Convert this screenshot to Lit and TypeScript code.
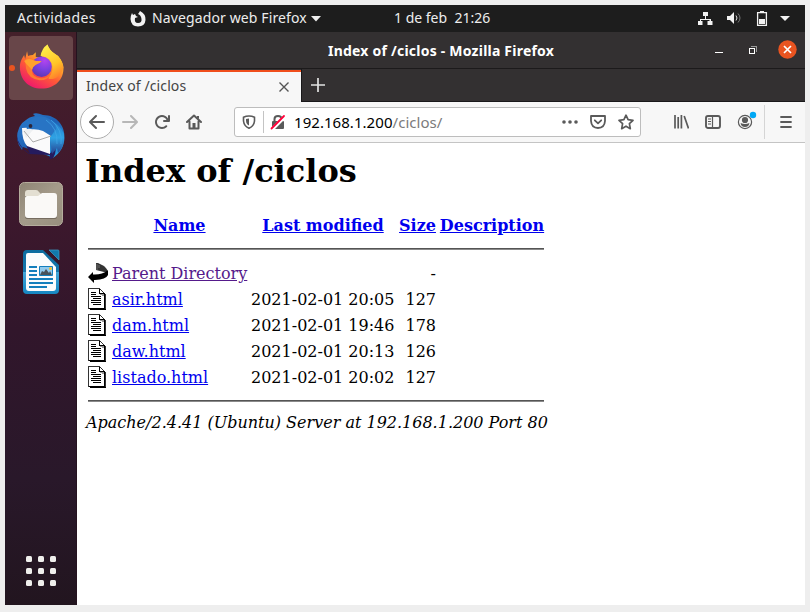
import { LitElement, html, css, svg } from "lit";
import { customElement } from "lit/decorators.js";

const firefox = html`<svg width="46" height="48" viewBox="0 0 46 48">
  <defs>
    <linearGradient id="fo" x1=".85" y1="0" x2=".25" y2="1"><stop offset="0" stop-color="#fff44f"/><stop offset=".35" stop-color="#ffb02a"/><stop offset=".62" stop-color="#ff5a36"/><stop offset="1" stop-color="#ec1470"/></linearGradient>
    <linearGradient id="fy" x1=".3" y1="0" x2=".7" y2="1"><stop offset="0" stop-color="#fff04b"/><stop offset=".6" stop-color="#ffc428"/><stop offset="1" stop-color="#ff7a2c"/></linearGradient>
    <radialGradient id="fp" cx=".65" cy=".2" r=".9"><stop offset="0" stop-color="#b345ee"/><stop offset=".5" stop-color="#7a40e0"/><stop offset="1" stop-color="#5a35a8"/></radialGradient>
  </defs>
  <g transform="translate(.3 -1.500) scale(.97)">
  <path fill="url(#fo)" d="M8 9 9 14Q11 13 14 13L17 10V15H23L29 2Q31 8 37 12L40 14Q45 20 45.500 26C46 38 37 47.500 23 47.500S1 38 .6 26C.5 20 3 16 5 13L6 17Z"/>
  <path fill="url(#fy)" d="M29 2Q31 8 36 11L40 14Q45 20 45.500 26C42 37 34 39 30 37Q37 28 33 21T22 14Q23 6 29 2Z"/>
  <circle cx="23" cy="25" r="10.500" fill="url(#fp)"/>
  <path fill="#ff7a2f" d="M6 18Q10 14 15 18L20 20Q19 22 15 24 12 28 14 33C18 38 28 38 32 33Q30 39 21 39 9 37 7 27Z"/>
  <path fill="#ffa22c" d="M5 19Q10 15 16 19H23Q21 22 17 23 14 25 13 28L7 22Z"/>
  </g>
</svg>`;

const thunderbird = html`<svg width="48" height="48" viewBox="0 0 48 48">
  <defs>
    <linearGradient id="tb" x1="0" y1="0" x2="1" y2="1"><stop offset="0" stop-color="#2c7ed0"/><stop offset=".5" stop-color="#1f61b4"/><stop offset="1" stop-color="#2aa7e6"/></linearGradient>
    <linearGradient id="tw" x1="0" y1="0" x2="0" y2="1"><stop offset="0" stop-color="#2473c4"/><stop offset=".55" stop-color="#2fa3e4"/><stop offset="1" stop-color="#26408f"/></linearGradient>
  </defs>
  <path fill="url(#tb)" d="M16 2Q19 0 26 3C40 3 48 14 47.500 26 47 35 43 41 36 46L37 43Q33 46 32 44L6 35 5 38Q1 33 0 27 0 13 9 8Q12 5 18 4Z"/>
  <path fill="#251b5e" d="M0 24Q1 34 13 42L9 33 34 41 37 31Q41 38 36 46 31 49 33 43L12 42Q-1 33 0 24Z"/>
  <path fill="url(#tw)" d="M28 6Q42 10 47 22 48 34 41 41L40 36 35 42Q33 24 30 20Z"/>
  <path fill="#fafafb" d="M5 16 22 15 33 22 33 42 10 34Q5 28 5 16Z"/>
  <path fill="#2874c4" d="M9 12Q17 2 28 5 38 8 39 17L34 24 26 19Q19 16 10 18Z"/>
  <path fill="#eef0f2" d="M6 19Q11 15 16 18L9 26Z"/>
  <path fill="none" stroke="#aaa" d="M7 19 16 30 34 24"/>
  <path fill="none" stroke="#43a7e8" stroke-width=".7" d="M29 8Q41 16 40 32M34 8Q46 18 44 32"/>
  <circle cx="13.500" cy="14" r="1.900" fill="#2d2638"/>
</svg>`;

const files = html`<svg width="46" height="46" viewBox="0 0 46 46">
  <defs><linearGradient id="fb" x2="1" y2="1"><stop stop-color="#8d8474"/><stop offset=".5" stop-color="#a49b8a"/><stop offset="1" stop-color="#978e7d"/></linearGradient></defs>
  <rect x="1.500" y="1.500" width="43" height="43" rx="5" fill="url(#fb)" stroke="#b5ad9d"/>
  <path fill="#e3dfd2" d="M7 12Q7 9 10 9H18Q20 9 21 11L23 13V20H7Z"/>
  <path fill="#766d60" d="M7 15H39V36Q39 38 36 38H10Q7 38 7 36Z"/>
  <path fill="#faf9f7" d="M7 17Q7 15 9 15H20L24 12H36Q39 12 39 15V34Q39 37 36 37H10Q7 37 7 34Z"/>
</svg>`;

const writer = html`<svg width="38" height="46" viewBox="0 0 38 46">
  <defs><linearGradient id="wb" y2="1" x2="0"><stop stop-color="#0d6c9f"/><stop offset=".49" stop-color="#1578ad"/><stop offset=".5" stop-color="#43a7da"/><stop offset="1" stop-color="#1687c2"/></linearGradient></defs>
  <path fill="url(#wb)" d="M5 1H21L37 16V41Q37 45 33 45H5Q1 45 1 41V5Q1 1 5 1Z"/>
  <path fill="#fbfcfd" d="M6 4H21L34 18V39Q34 42 31 42H7Q4 42 4 39V6Q4 4 6 4Z"/>
  <path fill="#1279ac" stroke="#3ca0cc" stroke-width=".7" d="M27 1H36Q37 1 37 2V11Z"/>
  <path stroke="#147fbd" stroke-width="2" d="M7 18H15M7 22H15M7 26H15M7 30H31M7 34H31M7 38H25"/>
  <path fill="#91caed" stroke="#147fbd" d="M17.500 17.500H30.500V26.500H17.500Z"/>
  <path fill="#48535b" d="M18 26 20 22 22 23 24 20 27 24 28 22 30 26Z"/><circle cx="28.500" cy="19.500" r="1.500" fill="#f5c12b"/>
</svg>`;

const docIcon = html`<svg class="ficon" width="20" height="22" viewBox="0 0 20 22" shape-rendering="crispEdges">
  <path fill="#000" d="M2 20H16V6H18V22H2Z"/>
  <path fill="#fff" stroke="#333" d="M.5 .5H11.500L17.500 6.500V20.500H.5Z"/>
  <path fill="#999" d="M12 6H17V8H14V7H12Z"/>
  <path stroke="#000" fill="none" d="M11.500 1V5.500H17M16.500 6V20.500M1 20.500H17"/>
  <path stroke="#000" d="M3 4.500H8M3 6.500H8M3 8.500H13M5 10.500H13M3 12.500H13M3 14.500H13M5 16.500H13"/>
</svg>`;

const backIcon = html`<svg class="ficon" width="20" height="22" viewBox="0 0 20 22">
  <path fill="#333" d="M8 1H10L15 3.500Q19 6 20 10L16 10 8 8Z"/>
  <path stroke="#999" stroke-width=".6" d="M9 2V8M11 3V6"/>
  <path d="M0 15 5 10V12.500Q14 13 19.500 8.500H20V13Q18 17.500 7 18H6V21Z"/>
</svg>`;

const ico = (body: unknown, size = 16) =>
  html`<svg width=${size} height=${size} viewBox="0 0 16 16" fill="#5a5a5a">${body}</svg>`;

const arrow = svg`<path d="M15 7H3.414l4.293-4.293a1 1 0 0 0-1.414-1.414l-6 6a1 1 0 0 0 0 1.414l6 6a1 1 0 0 0 1.414-1.414L3.414 9H15a1 1 0 0 0 0-2z"/>`;

const rows = [
  ["asir.html", "2021-02-01 20:05", "127"],
  ["dam.html", "2021-02-01 19:46", "178"],
  ["daw.html", "2021-02-01 20:13", "126"],
  ["listado.html", "2021-02-01 20:02", "127"],
];

@customElement("app-root")
export class AppRoot extends LitElement {
  static styles = css`
    :host { display: block; box-sizing: border-box; width: 810px; height: 612px; padding: 5px 5px 7px; background: #eee; font-family: "Noto Sans", sans-serif; overflow: hidden; }
    * { box-sizing: border-box; }
    svg { display: block; flex: none; }
    .screen { height: 600px; display: grid; grid-template: 27px 573px / 72px 728px; }
    .top { grid-column: 1 / 3; background: #1d1d1d; color: #ededed; font-size: 14px; display: grid; grid-template-columns: 113px 276px 1fr 112px; align-items: center; white-space: pre; line-height: 18px; }
    .top span { padding-bottom: 1px; }
    .act { padding-left: 12px; letter-spacing: .38px; }
    .app { display: flex; align-items: center; padding-left: 12px; }
    .app svg:first-child { margin-right: 6px; }
    .tri { margin-left: 4px; }
    .appname { width: 155px; letter-spacing: .12px; }
    .status { display: flex; align-items: center; }
    .dock { background: linear-gradient(#44202a 0, #41192d 24%, #31162b 52%, #29182a 78%, #22151f 100%); display: flex; flex-direction: column; align-items: center; padding: 4px 4px 19px; border-right: 1px solid #25121f; }
    .tile { width: 64px; height: 64px; border-radius: 4px; background: #684649; display: flex; align-items: center; flex: none; }
    .run { width: 6px; height: 6px; border-radius: 3px; background: #e95420; margin-right: 4px; }
    .tbird { margin-top: 12px; } .files { margin-top: 21px; padding-left: 1px; } .writer { margin-top: 22px; padding-left: 1px; }
    .grid { display: grid; grid-template-columns: repeat(3, 6px); gap: 6px; margin-top: auto; padding-left: 1px; }
    .grid i { height: 6px; border-radius: 1.5px; background: #efefec; }
    .win { display: flex; flex-direction: column; background: #fff; }
    .title { height: 36px; background: #333031; color: #fff; font-weight: 700; font-size: 14px; display: grid; grid-template-columns: 251px 1fr 98px; align-items: center; white-space: nowrap; }
    .title-text { grid-column: 2; letter-spacing: .22px; }
    .wc { display: flex; align-items: center; padding-bottom: 1px; }
    .close { margin-left: 16px; }
    .tabs { height: 34px; border-top: 1px solid #1c1a1b; background: #333031; display: flex; }
    .tab { width: 224px; margin-top: 1px; border-top: 2px solid #f04e1c; background: #f7f7f7; color: #444; font-size: 14px; line-height: 18px; display: flex; align-items: center; padding: 0 11px 1px 9px; }
    .tabname { letter-spacing: .1px; padding-bottom: 2px; }
    .tab svg { margin-left: auto; }
    .rest { flex: 1; border-bottom: 1px solid #19181a; border-left: 1px solid #19181a; display: flex; align-items: center; padding-left: 9px; }
    .bar { height: 41px; background: #f7f7f7; border-bottom: 1px solid #c4c4c4; display: flex; align-items: center; padding-left: 3px; flex: none; }
    .back { width: 34px; height: 34px; border-radius: 50%; border: 1px solid #adadad; background: #fff; display: flex; align-items: center; justify-content: center; margin-right: 8px; }
    .g16 { margin-right: 16px; }
    .g12 { margin-right: 12px; }
    .fade { opacity: .4; }
    .url { width: 407px; height: 30px; margin: 0 32px 0 16px; background: #fff; border: 1px solid #bdbdbd; border-radius: 3px; display: flex; align-items: center; padding: 0 6px; font-size: 15px; color: #7b7b7b; }
    .url b { color: #000; font-weight: 400; }
    .addr { flex: 1; padding-left: 8px; letter-spacing: .05px; white-space: nowrap; }
    .vs { width: 1px; height: 22px; background: #c4c4c4; margin: 0 6px; }
    .vl { width: 1px; height: 34px; background: #d5d5d5; margin: 0 13px 0 7px; }
    .page { flex: 1; font: 16px/20px "DejaVu Serif", serif; color: #000; padding: 8px; }
    h1 { font-size: 32px; line-height: 40px; margin: 0; white-space: nowrap; }
    .table { width: 458px; margin: 23px 0 0 3px; }
    .tr { display: grid; grid-template-columns: 20px 135px 144px 37px 104px; column-gap: 4px; height: 26px; align-items: center; white-space: nowrap; }
    .tr span { padding-top: 2px; }
    .head { font-weight: 700; justify-items: center; height: 22px; }
    .head a { padding-top: 2px; }
    .r { justify-self: end; }
    a { color: #0000ee; text-decoration: underline; }
    .seen { color: #551a8b; }
    .hr { width: 456px; height: 2px; background: linear-gradient(#555 50%, #8a8a8a 50%); }
    .h1r { margin: 12px 0 10px; } .h2r { margin: 10px 0 11px; }
    .sig { font-style: italic; white-space: nowrap; padding-left: 1px; }
  `;

  render() {
    return html`<div class="screen">
      <div class="top">
        <span class="act">Actividades</span>
        <div class="app">
          <svg width="16" height="16" viewBox="0 0 16 16"><path fill="#f2f2f2" d="M10 0Q16 3 15.500 9 15 15.500 8 15.500T.5 8Q.5 5 2 2L3 4 5 3 6 5 8 6 5 7Q4 12 8 12T11.500 8 8 3Q9 2 10 0Z"/></svg>
          <span class="appname">Navegador web Firefox</span>
          <svg class="tri" width="10" height="6" viewBox="0 0 10 6"><path fill="#eee" d="M0 0H10L5 5.500Z"/></svg>
        </div>
        <span>1 de feb  21:26</span>
        <div class="status">
          <svg width="112" height="16" viewBox="0 0 112 16" fill="#f2f2f2">
            <path d="M10 1H15V5H13V8H18V10H19.500V14H14.500V10H16.500V9H8V10H9.500V14H5V10H7V8H12V5H10Z"/>
            <path d="M34 5H37L41 1V13L37 9H34Z"/><path fill="none" stroke="#ddd" d="M43 4.500Q45 7 43 9.500"/><path fill="none" stroke="#777" d="M45 2.500Q49 7 45 11.500"/>
            <path fill="none" stroke="#f2f2f2" stroke-width="1.300" d="M64.600 1.600H73.400V14.400H64.600Z"/><path d="M67 0H71V2H67ZM66 8H72V13H66Z"/>
            <path d="M87 5H97L92 10Z"/>
          </svg>
        </div>
      </div>

      <div class="dock">
        <div class="tile"><span class="run"></span>${firefox}</div>
        <div class="tbird">${thunderbird}</div>
        <div class="files">${files}</div>
        <div class="writer">${writer}</div>
        <div class="grid">${Array.from({ length: 9 }, () => html`<i></i>`)}</div>
      </div>

      <div class="win">
        <div class="title">
          <span class="title-text">Index of /ciclos - Mozilla Firefox</span>
          <div class="wc">
            <svg width="55" height="12" viewBox="0 0 55 12" fill="none" shape-rendering="crispEdges"><path stroke="#fff" d="M8 8.500H16M42.500 4.500H47.500V9.500H42.500Z"/><path stroke="#999" d="M44 2.500H49.500V8"/></svg>
            <svg class="close" width="19" height="19" viewBox="0 0 19 19"><circle cx="9.500" cy="9.500" r="9.200" fill="#e95420"/><path stroke="#fff" stroke-width="1.700" d="M6 6 13 13M13 6 6 13"/></svg>
          </div>
        </div>
        <div class="tabs">
          <div class="tab"><span class="tabname">Index of /ciclos</span>
            <svg width="12" height="12" viewBox="0 0 12 12"><path stroke="#555" stroke-width="1.400" d="M1.500 1.500 10.500 10.500M10.500 1.500 1.500 10.500"/></svg></div>
          <div class="rest"><svg width="14" height="14" viewBox="0 0 14 14"><path stroke="#e2e2e2" stroke-width="1.700" d="M7 0V14M0 7H14"/></svg></div>
        </div>
        <div class="bar">
          <div class="back">${ico(arrow)}</div>
          <svg class="g16 fade" width="16" height="16" viewBox="0 0 16 16" fill="#5a5a5a"><g transform="matrix(-1 0 0 1 16 0)">${arrow}</g></svg>
          <div class="g16">${ico(svg`<path d="M15 1a1 1 0 0 0-1 1v2.418A6.995 6.995 0 1 0 8 15a6.954 6.954 0 0 0 4.950-2.050 1 1 0 0 0-1.414-1.414A5.019 5.019 0 1 1 12.549 6H10a1 1 0 0 0 0 2h5a1 1 0 0 0 1-1V2a1 1 0 0 0-1-1z"/>`)}</div>
          <div class="g16">${ico(svg`<path fill="none" stroke="#5a5a5a" stroke-width="2" stroke-linejoin="round" stroke-linecap="round" d="M1 8 8 1.500 15 8M3.500 7.500V14.500H12.500V7.500"/><path d="M6.500 9H9.500V14H6.500ZM11 2H13V5L11 4Z"/>`)}</div>
          <div class="url">
            ${ico(svg`<path fill="none" stroke="#5a5a5a" stroke-width="1.600" d="M8 2C10 2 12 2.500 13.500 3.200V7Q13 12 8 14.200 3 12 2.500 7V3.200Q5 2 8 2Z"/><path d="M8 4.500V11.500Q5 10 5 6.500V5Z"/>`)}
            <span class="vs"></span>
            ${ico(svg`<path d="M3 7H13Q14 7 14 8V14Q14 15 13 15H3Q2 15 2 14V8Q2 7 3 7Z"/><path fill="none" stroke="#5a5a5a" stroke-width="2" d="M4.500 8V5Q4.500 2 8 2T11.500 5V8"/><path stroke="#fff" stroke-width="3.500" d="M2 15.500 15 2.500"/><path stroke="#ff0039" stroke-width="1.800" stroke-linecap="round" d="M1.500 14.500 14 2"/>`)}
            <span class="addr"><b>192.168.1.200</b>/ciclos/</span>
            <div class="g12">${ico(svg`<circle cx="2" cy="8" r="1.800"/><circle cx="8" cy="8" r="1.800"/><circle cx="14" cy="8" r="1.800"/>`)}</div>
            <div class="g12">${ico(svg`<path fill="none" stroke="#5a5a5a" stroke-width="1.800" stroke-linejoin="round" d="M1 2H15V7Q14.500 14 8 14T1 7Z"/><path fill="none" stroke="#5a5a5a" stroke-width="1.800" stroke-linecap="round" stroke-linejoin="round" d="M4.800 6.300 8 9.300 11.200 6.300"/>`)}</div>
            ${ico(svg`<path fill="none" stroke="#5a5a5a" stroke-width="1.700" stroke-linejoin="round" d="M8 1.200 10.100 5.700 15 6.300 11.400 9.700 12.300 14.700 8 12.200 3.700 14.700 4.600 9.700 1 6.300 5.900 5.700Z"/>`)}
          </div>
          <div class="g16">${ico(svg`<path fill="none" stroke="#5a5a5a" stroke-width="1.700" d="M2 1V14.500M5.200 3V14.500M8.400 1V14.500M11.200 2 15.500 14.500"/>`)}</div>
          <div class="g16">${ico(svg`<rect x="1" y="2" width="14" height="12" rx="2" fill="none" stroke="#5a5a5a" stroke-width="1.900"/><path stroke="#5a5a5a" stroke-width="1.200" d="M7.500 2V14M3 5H6M3 7.500H6M3 10H6"/>`)}</div>
          <svg width="20" height="24" viewBox="0 0 20 24" fill="#5a5a5a"><circle cx="8" cy="12" r="6.600" fill="none" stroke="#5a5a5a" stroke-width="1.200"/><circle cx="8" cy="10" r="3.100"/><path d="M3.600 13Q8 15 12.400 13 12 17 8 17T3.600 13Z"/><circle cx="16" cy="5" r="3.200" fill="#00a8f5"/></svg>
          <span class="vl"></span>
          ${ico(svg`<path stroke="#5a5a5a" stroke-width="1.800" stroke-linecap="round" d="M3 3H13M3 8H13M3 13H13"/>`)}
        </div>
        <div class="page">
          <h1>Index of /ciclos</h1>
          <div class="table">
            <div class="tr head"><span></span><a>Name</a><a>Last modified</a><a>Size</a><a>Description</a></div>
            <div class="hr h1r"></div>
            <div class="tr">${backIcon}<span><a class="seen">Parent Directory</a></span><span></span><span class="r">-</span></div>
            ${rows.map(([n, d, s]) => html`<div class="tr">${docIcon}<span><a>${n}</a></span><span>${d}</span><span class="r">${s}</span></div>`)}
            <div class="hr h2r"></div>
          </div>
          <div class="sig">Apache/2.4.41 (Ubuntu) Server at 192.168.1.200 Port 80</div>
        </div>
      </div>
    </div>`;
  }
}
